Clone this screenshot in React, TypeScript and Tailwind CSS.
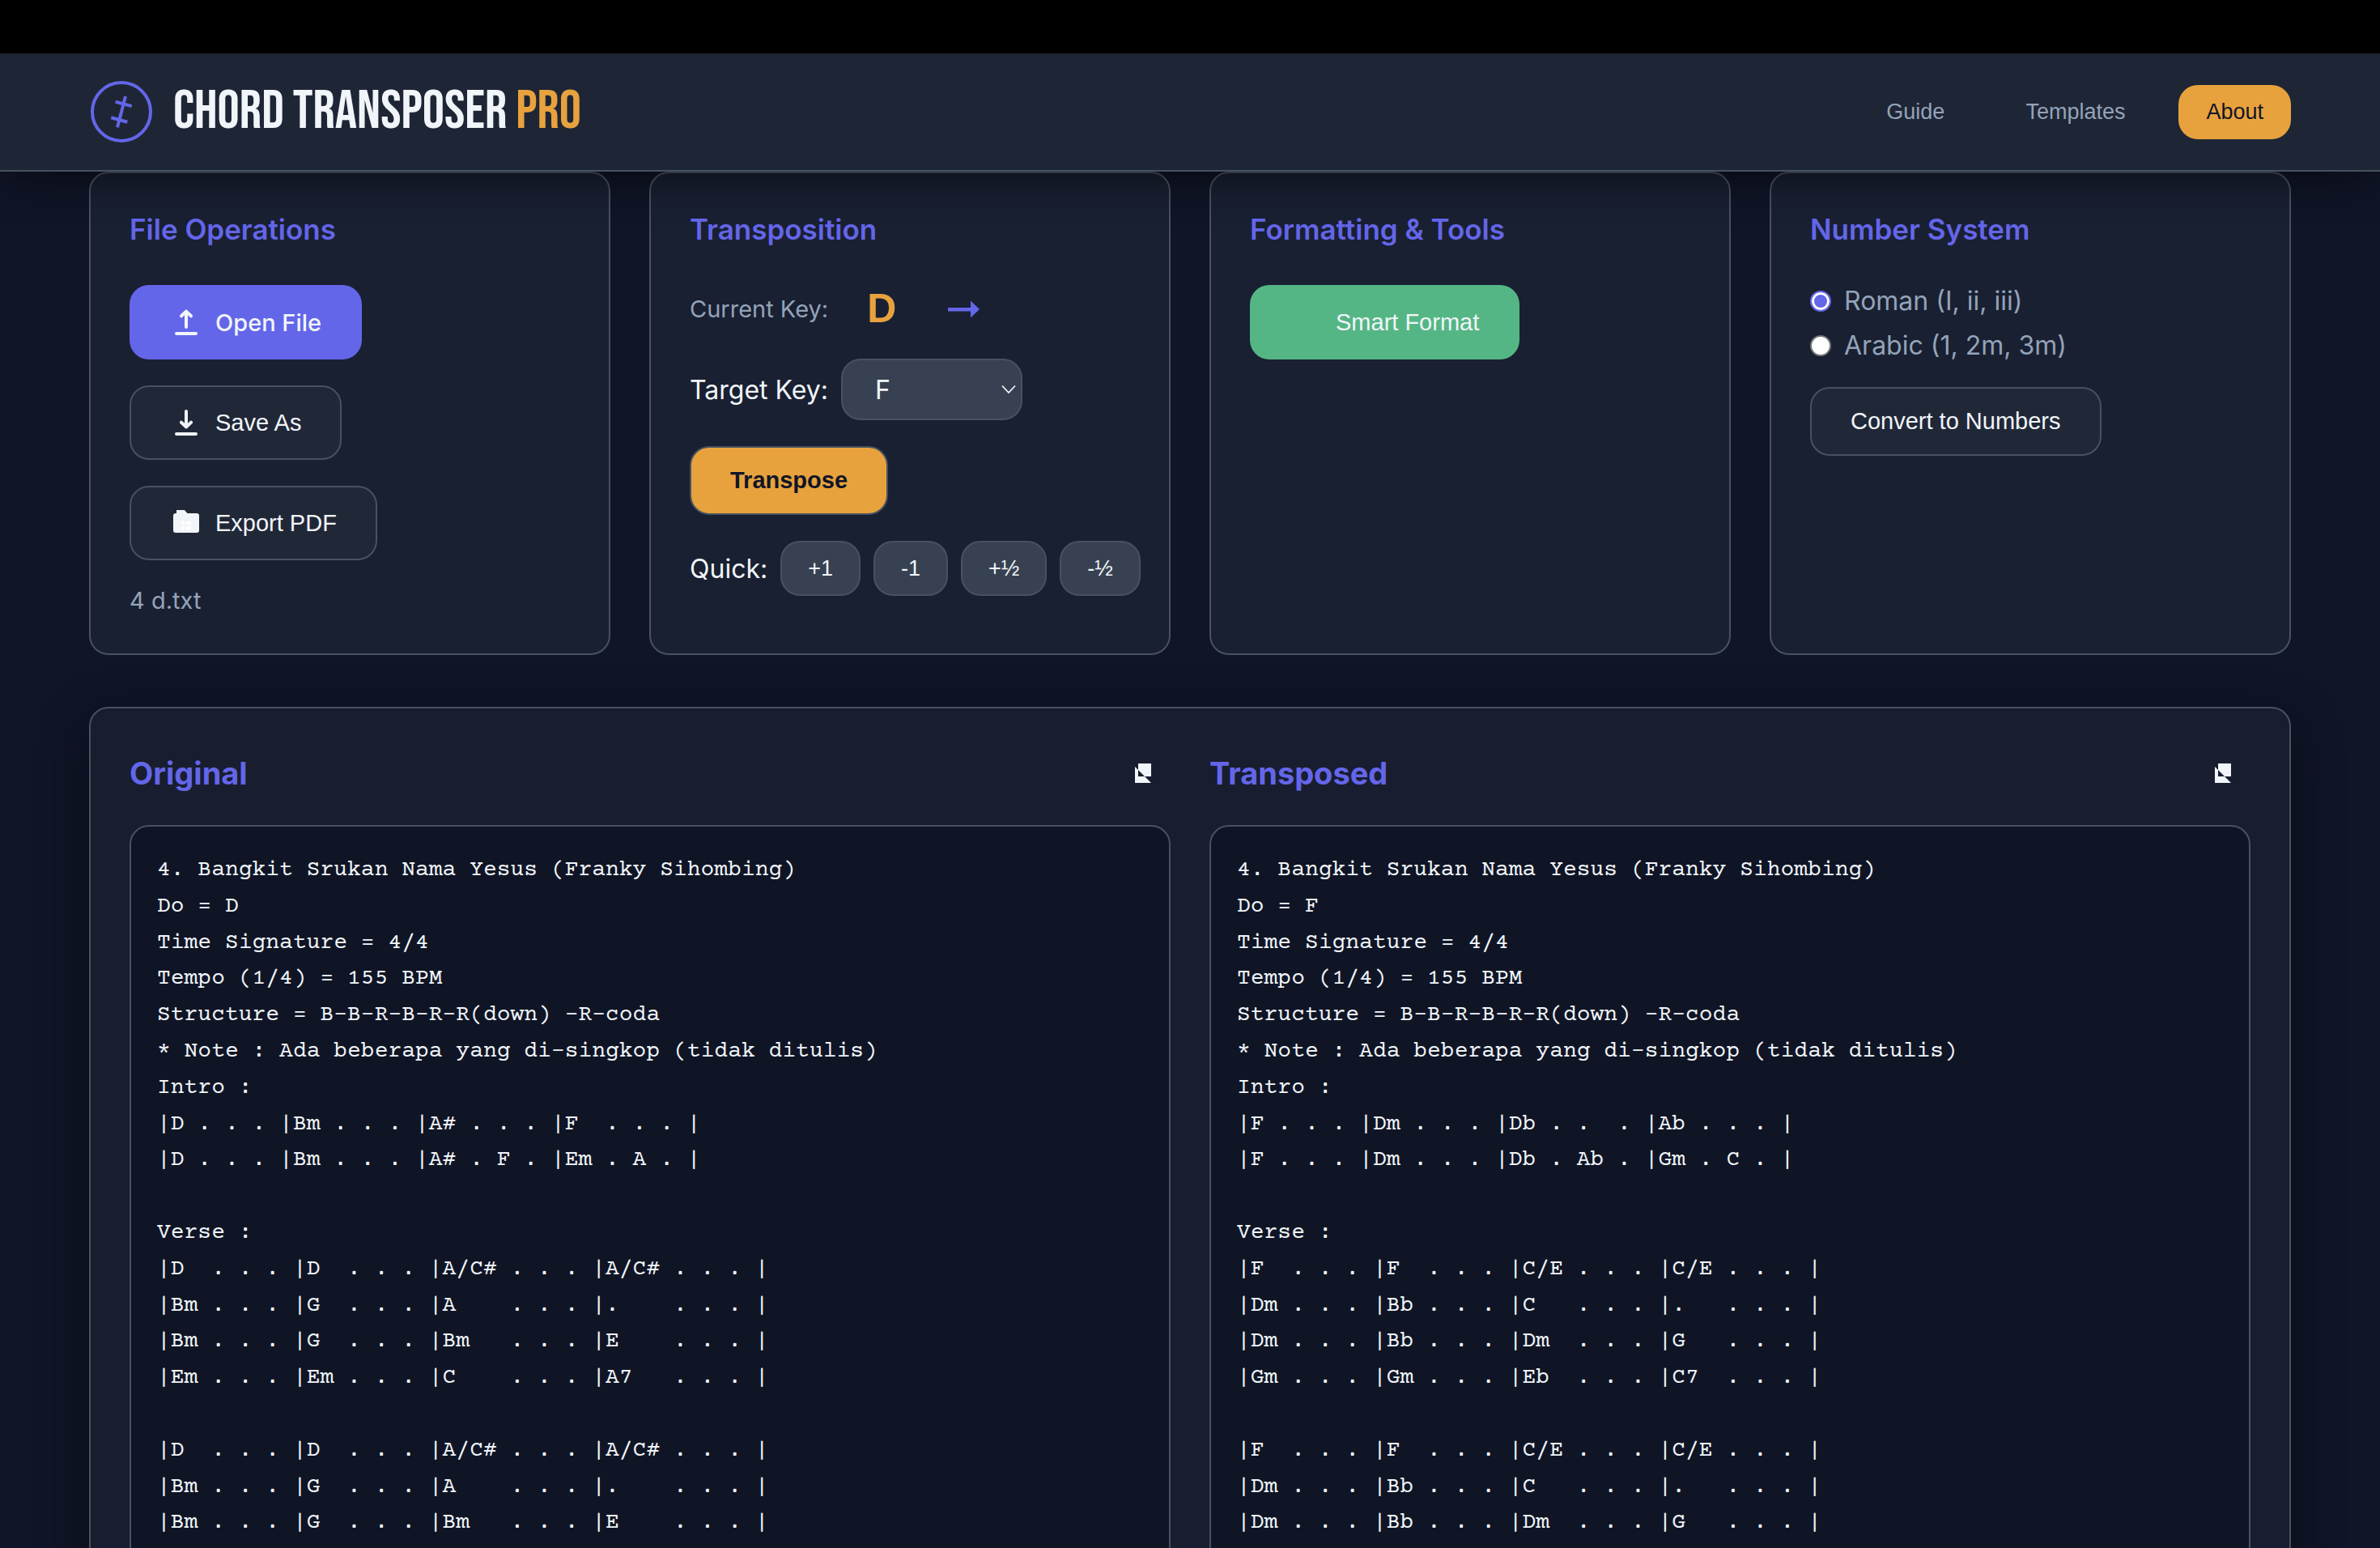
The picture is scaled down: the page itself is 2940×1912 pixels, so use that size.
import { useState, type ReactNode } from "react";

const original = `4. Bangkit Srukan Nama Yesus (Franky Sihombing)
Do = D
Time Signature = 4/4
Tempo (1/4) = 155 BPM
Structure = B-B-R-B-R-R(down) -R-coda
* Note : Ada beberapa yang di-singkop (tidak ditulis)
Intro :
|D . . . |Bm . . . |A# . . . |F  . . . |
|D . . . |Bm . . . |A# . F . |Em . A . |

Verse :
|D  . . . |D  . . . |A/C# . . . |A/C# . . . |
|Bm . . . |G  . . . |A    . . . |.    . . . |
|Bm . . . |G  . . . |Bm   . . . |E    . . . |
|Em . . . |Em . . . |C    . . . |A7   . . . |

|D  . . . |D  . . . |A/C# . . . |A/C# . . . |
|Bm . . . |G  . . . |A    . . . |.    . . . |
|Bm . . . |G  . . . |Bm   . . . |E    . . . |`;

const transposed = `4. Bangkit Srukan Nama Yesus (Franky Sihombing)
Do = F
Time Signature = 4/4
Tempo (1/4) = 155 BPM
Structure = B-B-R-B-R-R(down) -R-coda
* Note : Ada beberapa yang di-singkop (tidak ditulis)
Intro :
|F . . . |Dm . . . |Db . .  . |Ab . . . |
|F . . . |Dm . . . |Db . Ab . |Gm . C . |

Verse :
|F  . . . |F  . . . |C/E . . . |C/E . . . |
|Dm . . . |Bb . . . |C   . . . |.   . . . |
|Dm . . . |Bb . . . |Dm  . . . |G   . . . |
|Gm . . . |Gm . . . |Eb  . . . |C7  . . . |

|F  . . . |F  . . . |C/E . . . |C/E . . . |
|Dm . . . |Bb . . . |C   . . . |.   . . . |
|Dm . . . |Bb . . . |Dm  . . . |G   . . . |`;

const keys = ["C", "C#", "D", "Eb", "E", "F", "F#", "G", "Ab", "A", "Bb", "B"];

const outlineButton =
  "flex items-center rounded-3xl border-2 border-[#475261] bg-[#202838] px-12 py-6 font-['Liberation_Sans',sans-serif] text-[29px] leading-[33px] text-[#f1f5f9]";
const solidButton =
  "flex items-center rounded-3xl px-[50px] py-[26px] text-[29px] leading-[33px] text-[#f1f5f9]";
const navButton =
  "rounded-3xl px-[34px] py-[18px] font-['Liberation_Sans',sans-serif] text-[27px] leading-[31px]";

function Logo() {
  return (
    <svg className="size-20" viewBox="0 0 80 80" fill="none" stroke="#6466e9" strokeWidth="4" aria-hidden="true">
      <circle cx="40" cy="40" r="36" />
      <path d="M45 21 35 59.3M32.7 27.7l20 5.4M27.3 47.3l20 5.4" />
    </svg>
  );
}

function UploadIcon() {
  return (
    <svg className="size-10" viewBox="0 0 40 40" fill="none" stroke="currentColor" strokeWidth="4" strokeLinecap="round" strokeLinejoin="round" aria-hidden="true">
      <path d="M20 26V6.6M14 12.3l6-5.7 6 5.7M8 34h24" />
    </svg>
  );
}

function DownloadIcon() {
  return (
    <svg className="size-10" viewBox="0 0 40 40" fill="none" stroke="currentColor" strokeWidth="4" strokeLinecap="round" strokeLinejoin="round" aria-hidden="true">
      <path d="M20 6v19.4M14 19.7l6 5.7 6-5.7M8 34h24" />
    </svg>
  );
}

function FolderIcon() {
  return (
    <svg className="size-10" viewBox="0 0 40 40" aria-hidden="true">
      <path fill="currentColor" d="M8 4h10l3.4 4H33a3 3 0 0 1 3 3v18a3 3 0 0 1-3 3H7a3 3 0 0 1-3-3V11a3 3 0 0 1 3-3h1z" />
      <path fill="#fff" d="M14 18h4v4h-4zM20 18h6v4h-6zM14 24h4v4h-4zM20 24h6v4h-6z" />
    </svg>
  );
}

function CopyIcon() {
  return (
    <svg className="size-8" viewBox="0 0 32 32" fill="#f1f5f9" fillRule="evenodd" aria-hidden="true">
      <path d="M8 4h16v16H8zM4 8v20h20z" />
    </svg>
  );
}

function ArrowIcon() {
  return (
    <svg className="h-6 w-10" viewBox="0 0 40 24" fill="#6466e9" aria-hidden="true">
      <path d="M0 10h28V1.5L39 12 28 22.5V14.5H0z" />
    </svg>
  );
}

function Card({ title, children }: { title: string; children: ReactNode }) {
  return (
    <section className="rounded-3xl border-2 border-[#475261] bg-[#192032] p-12">
      <h2 className="mb-12 text-[35px] leading-[42px] font-semibold text-[#6466e9]">{title}</h2>
      {children}
    </section>
  );
}

function Sheet({ title, text }: { title: string; text: string }) {
  return (
    <section className="min-w-0">
      <div className="mb-8 flex items-center justify-between">
        <h2 className="text-[38px] leading-[46px] font-bold text-[#6466e9]">{title}</h2>
        <button type="button" aria-label={`Copy ${title}`} className="p-4">
          <CopyIcon />
        </button>
      </div>
      <pre className="overflow-hidden rounded-3xl border-2 border-[#475261] bg-[#101526] px-8 pt-8 pb-24 font-['Courier_Prime','Liberation_Mono',monospace] text-[28px] leading-[1.6]">
        {text}
      </pre>
    </section>
  );
}

export default function App() {
  const [system, setSystem] = useState("roman");
  const [target, setTarget] = useState("F");
  const radio =
    "size-[26px] appearance-none rounded-full border-2 border-[#767676] bg-white checked:border-[#6466e9] checked:bg-[#6466e9] checked:shadow-[inset_0_0_0_3px_#fff]";

  return (
    <div className="h-screen overflow-hidden bg-[#101527] font-['Inter',sans-serif] text-[32px] leading-[39px] text-[#f1f5f9]">
      <div className="h-[66px] bg-black" />
      <header className="relative z-10 flex items-center justify-between border-b-2 border-[#475261] bg-[#1e2636] px-[110px] py-8 shadow-[0_20px_50px_-10px_rgba(0,0,0,0.5)]">
        <div className="flex items-center gap-6">
          <Logo />
          <h1 className="font-['Bebas_Neue',sans-serif] text-[68px] leading-[76px]">
            CHORD TRANSPOSER <span className="text-[#e8a23d]">PRO</span>
          </h1>
        </div>
        <nav className="flex gap-8">
          <button type="button" className={`${navButton} text-[#94a3b8]`}>Guide</button>
          <button type="button" className={`${navButton} text-[#94a3b8]`}>Templates</button>
          <button type="button" className={`${navButton} bg-[#e8a23d] text-[#101527]`}>About</button>
        </nav>
      </header>

      <main className="flex flex-col gap-16 px-[110px]">
        <div className="grid grid-cols-4 gap-12">
          <Card title="File Operations">
            <div className="flex flex-col items-start gap-8">
              <button type="button" className={`${solidButton} gap-4 bg-[#6466e9] font-medium`}>
                <UploadIcon />
                Open File
              </button>
              <button type="button" className={`${outlineButton} gap-4`}>
                <DownloadIcon />
                Save As
              </button>
              <button type="button" className={`${outlineButton} gap-4`}>
                <FolderIcon />
                Export PDF
              </button>
              <p className="text-[29px] leading-[35px] text-[#94a3b8]">4 d.txt</p>
            </div>
          </Card>

          <Card title="Transposition">
            <div className="flex flex-col items-start gap-8">
              <div className="flex items-center gap-4">
                <span className="text-[29px] leading-[35px] text-[#94a3b8]">Current Key:</span>
                <span className="px-8 font-['Liberation_Sans',sans-serif] text-[50px] leading-[59px] font-bold text-[#e8a23d]">D</span>
                <span className="px-4">
                  <ArrowIcon />
                </span>
              </div>
              <div className="flex items-center gap-4">
                <label htmlFor="target">Target Key:</label>
                <div className="relative">
                  <select
                    id="target"
                    value={target}
                    onChange={(e) => setTarget(e.target.value)}
                    className="block h-[76px] w-56 appearance-none rounded-3xl border-2 border-[#475261] bg-[#374151] px-10"
                  >
                    {keys.map((k) => (
                      <option key={k}>{k}</option>
                    ))}
                  </select>
                  <svg className="pointer-events-none absolute top-8 right-2 h-3 w-[18px]" viewBox="0 0 18 12" fill="none" stroke="#f1f5f9" strokeWidth="1.8" aria-hidden="true">
                    <path d="M1 1.5l8 8.5 8-8.5" />
                  </svg>
                </div>
              </div>
              <button type="button" className="rounded-3xl border-2 border-[#475261] bg-[#e8a23d] px-12 py-6 font-['Liberation_Sans',sans-serif] text-[29px] leading-[33px] font-bold text-[#101527]">
                Transpose
              </button>
              <div className="flex items-center gap-4">
                <span>Quick:</span>
                {["+1", "-1", "+½", "-½"].map((step) => (
                  <button
                    key={step}
                    type="button"
                    className="rounded-3xl border-2 border-[#475261] bg-[#374151] px-8 py-4 font-['Liberation_Sans',sans-serif] text-[27px] leading-8"
                  >
                    {step}
                  </button>
                ))}
              </div>
            </div>
          </Card>

          <Card title="Formatting & Tools">
            <button type="button" className={`${solidButton} gap-4 bg-[#55b685] font-['Liberation_Sans',sans-serif]`}>
              <span className="size-10" />
              Smart Format
            </button>
          </Card>

          <Card title="Number System">
            <div className="flex flex-col items-start gap-4 text-[#94a3b8]">
              <label className="flex items-center gap-4">
                <input type="radio" name="system" className={radio} checked={system === "roman"} onChange={() => setSystem("roman")} />
                Roman (I, ii, iii)
              </label>
              <label className="flex items-center gap-4">
                <input type="radio" name="system" className={radio} checked={system === "arabic"} onChange={() => setSystem("arabic")} />
                Arabic (1, 2m, 3m)
              </label>
            </div>
            <button type="button" className={`${outlineButton} mt-8`}>Convert to Numbers</button>
          </Card>
        </div>

        <div className="grid grid-cols-2 gap-12 rounded-3xl border-2 border-[#475261] bg-[#181e2f] p-12 shadow-[0_16px_64px_rgba(0,0,0,0.4)]">
          <Sheet title="Original" text={original} />
          <Sheet title="Transposed" text={transposed} />
        </div>
      </main>
    </div>
  );
}
